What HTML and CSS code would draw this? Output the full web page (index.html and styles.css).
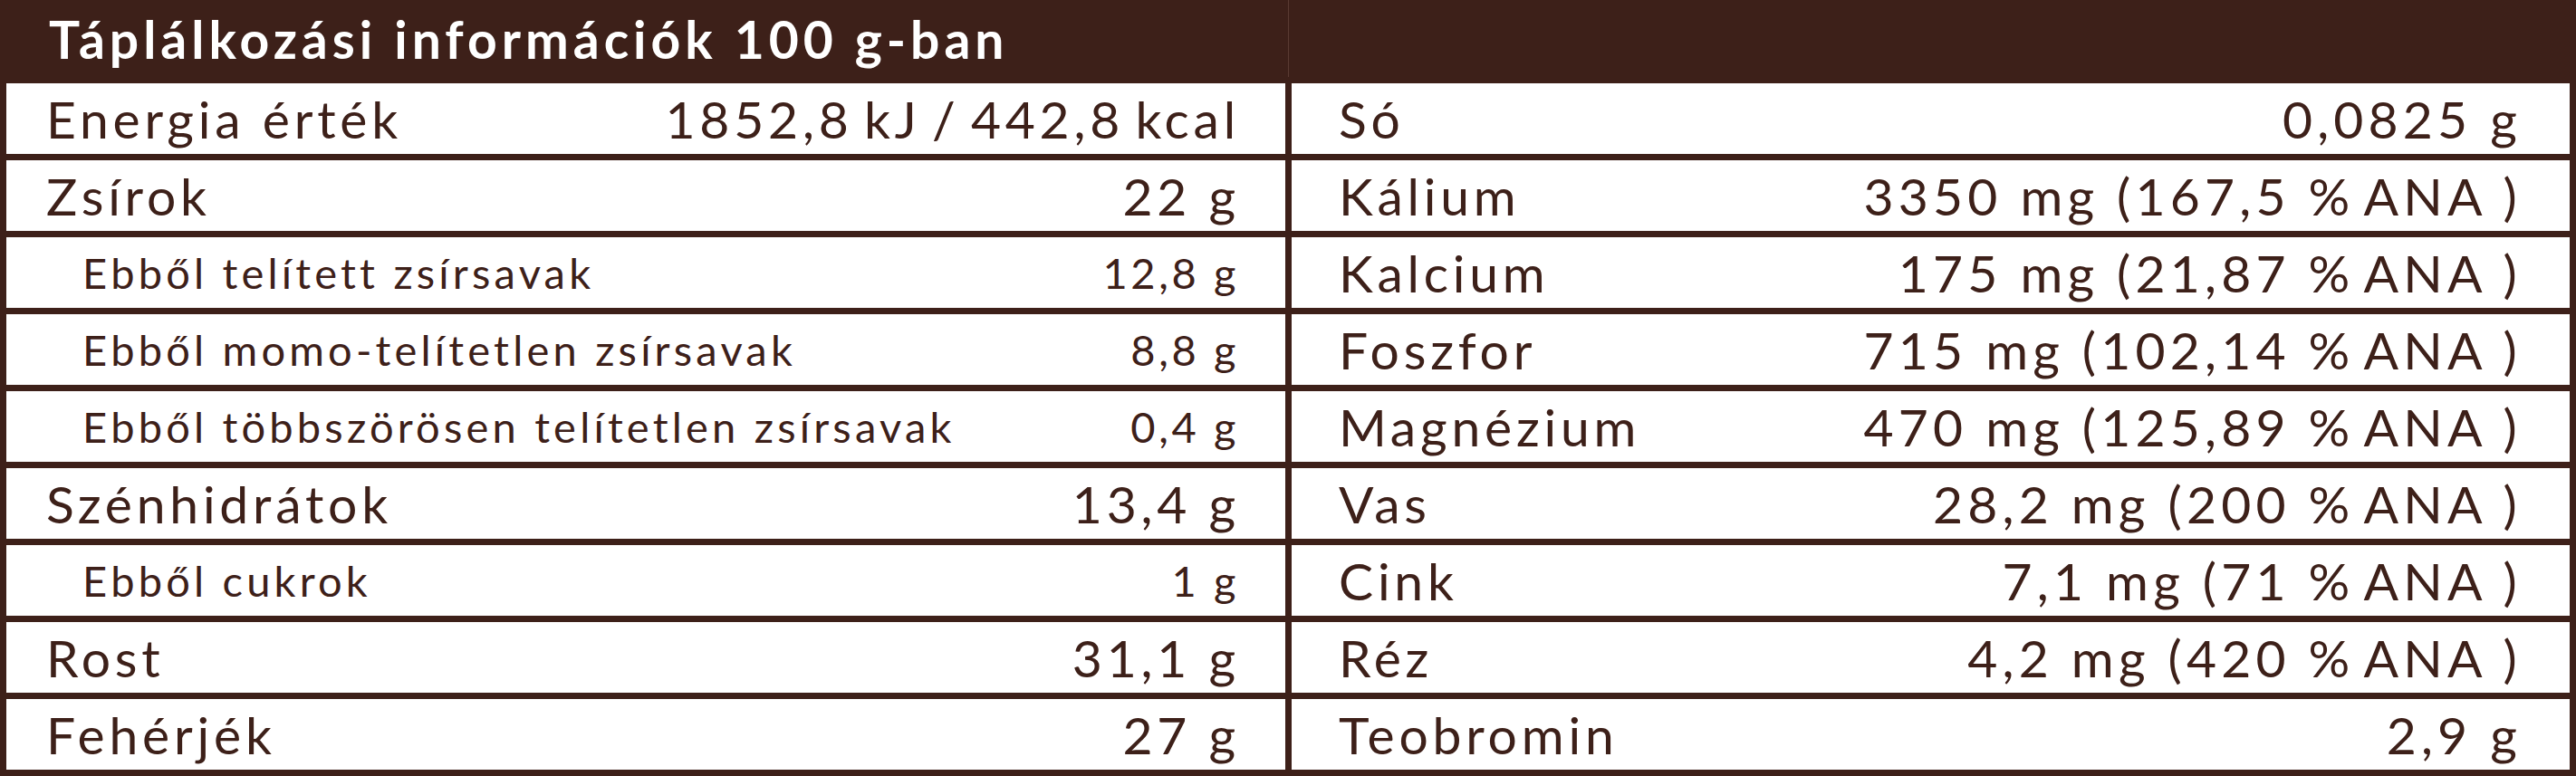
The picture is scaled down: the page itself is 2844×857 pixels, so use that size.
FILE: index.html
```html
<!DOCTYPE html>
<html lang="hu">
<head>
<meta charset="utf-8">
<title>Táplálkozási információk</title>
<link rel="stylesheet" href="styles.css">
</head>
<body>
<div class="panel">
  <div class="head">
    <h1 class="title">Táplálkozási információk 100 g-ban</h1>
    <span class="head-rule"></span>
  </div>
  <div class="grid">
    <div class="col">
      <div class="row"><span class="lbl">Energia érték</span><span class="val tight">1852,8 kJ / 442,8 kcal</span></div>
      <div class="row"><span class="lbl">Zsírok</span><span class="val">22 g</span></div>
      <div class="row sub"><span class="lbl">Ebből telített zsírsavak</span><span class="val">12,8 g</span></div>
      <div class="row sub"><span class="lbl">Ebből momo-telítetlen zsírsavak</span><span class="val">8,8 g</span></div>
      <div class="row sub"><span class="lbl">Ebből többszörösen telítetlen zsírsavak</span><span class="val">0,4 g</span></div>
      <div class="row"><span class="lbl">Szénhidrátok</span><span class="val">13,4 g</span></div>
      <div class="row sub"><span class="lbl">Ebből cukrok</span><span class="val">1 g</span></div>
      <div class="row"><span class="lbl">Rost</span><span class="val">31,1 g</span></div>
      <div class="row"><span class="lbl">Fehérjék</span><span class="val">27 g</span></div>
    </div>
    <div class="col right">
      <div class="row"><span class="lbl">Só</span><span class="val">0,0825 g</span></div>
      <div class="row"><span class="lbl">Kálium</span><span class="val">3350 mg (167,5 %<span class="ana">ANA</span> )</span></div>
      <div class="row"><span class="lbl">Kalcium</span><span class="val">175 mg (21,87 %<span class="ana">ANA</span> )</span></div>
      <div class="row"><span class="lbl">Foszfor</span><span class="val">715 mg (102,14 %<span class="ana">ANA</span> )</span></div>
      <div class="row"><span class="lbl">Magnézium</span><span class="val">470 mg (125,89 %<span class="ana">ANA</span> )</span></div>
      <div class="row"><span class="lbl">Vas</span><span class="val">28,2 mg (200 %<span class="ana">ANA</span> )</span></div>
      <div class="row"><span class="lbl">Cink</span><span class="val">7,1 mg (71 %<span class="ana">ANA</span> )</span></div>
      <div class="row"><span class="lbl">Réz</span><span class="val">4,2 mg (420 %<span class="ana">ANA</span> )</span></div>
      <div class="row"><span class="lbl">Teobromin</span><span class="val">2,9 g</span></div>
    </div>
  </div>
</div>
</body>
</html>
```
FILE: styles.css
```css
html, body {
  margin: 0;
  padding: 0;
  background: #ffffff;
}

.panel {
  width: 2844px;
  height: 857px;
  box-sizing: border-box;
  background: #3d2019;
  padding: 0 7px 7px 7px;
  font-family: "Lato", "Liberation Sans", sans-serif;
  color: #3d2019;
}

.head {
  position: relative;
  height: 92px;
  display: flex;
  align-items: center;
}

.title {
  margin: 0 0 6px 47px;
  font-size: 57px;
  font-weight: 700;
  color: #ffffff;
  letter-spacing: 5px;
  line-height: 1;
}

.head-rule {
  position: absolute;
  left: 1415px;
  top: 0;
  width: 1px;
  height: 85px;
  background: #5a3a32;
}

.grid {
  display: grid;
  grid-template-columns: 1412px 1411px;
  column-gap: 7px;
}

.col {
  display: flex;
  flex-direction: column;
  gap: 7px;
}

.row {
  height: 78px;
  background: #ffffff;
  display: flex;
  justify-content: space-between;
  align-items: center;
  padding: 0 50px 0 44px;
  font-size: 57px;
  letter-spacing: 4.8px;
  line-height: 78px;
  white-space: nowrap;
}

.val {
  font-variant-numeric: tabular-nums;
}

.val.tight {
  word-spacing: -7px;
}

.right .row {
  padding: 0 53px 0 52px;
}

.right .val {
  letter-spacing: 5.2px;
}

.row.sub {
  font-size: 47px;
  letter-spacing: 4.2px;
  padding-left: 84px;
  padding-right: 51px;
}

.row.sub .val {
  letter-spacing: 3.6px;
}

.ana {
  margin-left: 10px;
}
```
